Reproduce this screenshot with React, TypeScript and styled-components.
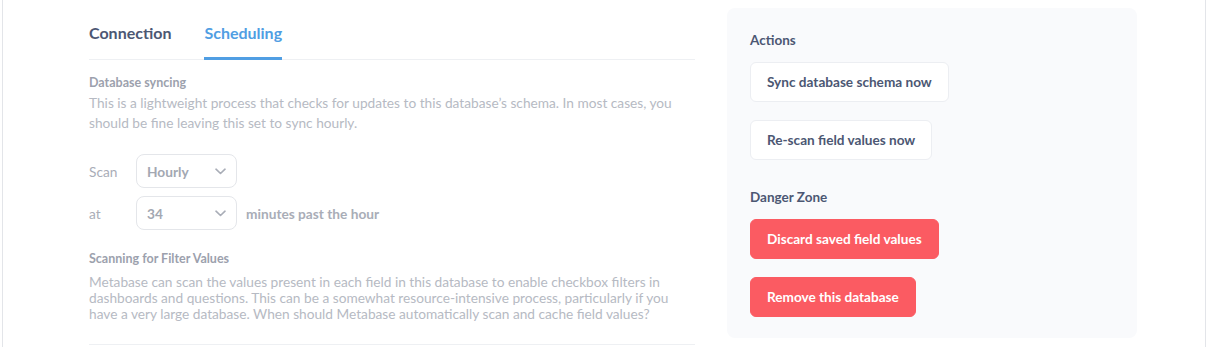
import React from "react";
import styled, { createGlobalStyle } from "styled-components";

const Global = createGlobalStyle`
  html, body { margin: 0; padding: 0; background: #ffffff; }
  body { font-family: Lato, "Open Sans", "Liberation Sans", sans-serif; -webkit-font-smoothing: antialiased; overflow: hidden; }
  * { box-sizing: border-box; }
`;

const Frame = styled.div`
  margin: 0 2px;
  height: 347px;
  border-left: 1px solid #e3e5e9;
  border-right: 1px solid #e3e5e9;
  display: flex;
  align-items: flex-start;
  gap: 32px;
  padding-left: 86px;
`;

const Main = styled.div`
  width: 606px;
  display: flex;
  flex-direction: column;
`;

const TabBar = styled.div`
  display: flex;
  gap: 33px;
  border-bottom: 1px solid #eef0f3;
`;

const Tab = styled.div<{ $active?: boolean }>`
  padding: 23px 0 14px;
  font-size: 16px;
  line-height: 20px;
  font-weight: 700;
  color: ${(p) => (p.$active ? "#509ee3" : "#4c5773")};
  border-bottom: 3px solid ${(p) => (p.$active ? "#509ee3" : "transparent")};
  margin-bottom: -1px;
`;

const SectionTitle = styled.div<{ $mt: number }>`
  margin-top: ${(p) => p.$mt}px;
  font-size: 12.5px;
  line-height: 16px;
  font-weight: 700;
  color: #9ca1ad;
`;

const Para = styled.p<{ $lh: number; $mt: number }>`
  margin: ${(p) => p.$mt}px 0 0;
  font-size: 13.7px;
  line-height: ${(p) => p.$lh}px;
  color: #b6bac3;
`;

const Rows = styled.div`
  margin-top: 21px;
  display: flex;
  flex-direction: column;
  gap: 8px;
`;

const Row = styled.div`
  display: flex;
  align-items: center;
`;

const RowLabel = styled.span`
  width: 47px;
  font-size: 13.7px;
  color: #a9adb7;
`;

const Select = styled.div`
  width: 101px;
  height: 34px;
  border: 1px solid #e4e6ea;
  border-radius: 8px;
  background: #fff;
  display: flex;
  align-items: center;
  justify-content: space-between;
  padding: 0 10px 0 10px;
  font-size: 13.7px;
  font-weight: 700;
  color: #a3a8b2;
`;

const After = styled.span`
  margin-left: 9px;
  font-size: 13.7px;
  font-weight: 700;
  color: #a9adb7;
`;

const Divider = styled.div`
  margin-top: 22px;
  border-top: 1px solid #eef0f3;
`;

const Panel = styled.aside`
  margin-top: 8px;
  width: 410px;
  height: 330px;
  background: #f9fafc;
  border-radius: 8px;
  padding: 24px 23px 21px;
  display: flex;
  flex-direction: column;
  align-items: flex-start;
`;

const PanelTitle = styled.div<{ $mt: number }>`
  margin-top: ${(p) => p.$mt}px;
  font-size: 13.5px;
  line-height: 16px;
  font-weight: 700;
  color: #4c5773;
`;

const ActionButton = styled.button<{ $danger?: boolean; $mt: number }>`
  margin-top: ${(p) => p.$mt}px;
  height: 40px;
  padding: 0 16px;
  border-radius: 6px;
  font-family: inherit;
  font-size: 13.6px;
  font-weight: 700;
  border: 1px solid ${(p) => (p.$danger ? "#fb5b62" : "#eceef2")};
  background: ${(p) => (p.$danger ? "#fb5b62" : "#ffffff")};
  color: ${(p) => (p.$danger ? "#ffffff" : "#4c5773")};
  cursor: pointer;
`;

const Chevron = () => (
  <svg width="11" height="7" viewBox="0 0 11 7" fill="none">
    <polyline points="1,1.2 5.5,5.5 10,1.2" stroke="#a9adb7" strokeWidth="1.6" strokeLinecap="round" strokeLinejoin="round" />
  </svg>
);

export default function App() {
  return (
    <>
      <Global />
      <Frame>
        <Main>
          <TabBar>
            <Tab>Connection</Tab>
            <Tab $active>Scheduling</Tab>
          </TabBar>
          <SectionTitle $mt={15}>Database syncing</SectionTitle>
          <Para $lh={20} $mt={2}>
            This is a lightweight process that checks for updates to this database’s schema. In most cases, you
            should be fine leaving this set to sync hourly.
          </Para>
          <Rows>
            <Row>
              <RowLabel>Scan</RowLabel>
              <Select>
                Hourly
                <Chevron />
              </Select>
            </Row>
            <Row>
              <RowLabel>at</RowLabel>
              <Select>
                34
                <Chevron />
              </Select>
              <After>minutes past the hour</After>
            </Row>
          </Rows>
          <SectionTitle $mt={21}>Scanning for Filter Values</SectionTitle>
          <Para $lh={16} $mt={7}>
            Metabase can scan the values present in each field in this database to enable checkbox filters in
            dashboards and questions. This can be a somewhat resource-intensive process, particularly if you
            have a very large database. When should Metabase automatically scan and cache field values?
          </Para>
          <Divider />
        </Main>
        <Panel>
          <PanelTitle $mt={0}>Actions</PanelTitle>
          <ActionButton $mt={14}>Sync database schema now</ActionButton>
          <ActionButton $mt={18}>Re-scan field values now</ActionButton>
          <PanelTitle $mt={29}>Danger Zone</PanelTitle>
          <ActionButton $danger $mt={14}>Discard saved field values</ActionButton>
          <ActionButton $danger $mt={18}>Remove this database</ActionButton>
        </Panel>
      </Frame>
    </>
  );
}
